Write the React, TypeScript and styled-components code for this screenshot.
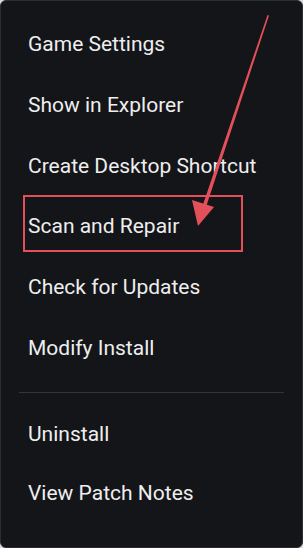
import React from 'react';
import styled, { createGlobalStyle } from 'styled-components';

const GlobalStyle = createGlobalStyle`
  html, body {
    margin: 0;
    padding: 0;
    background: #d9d9d9;
  }
`;

// the context menu panel, fills the whole window
const Menu = styled.div`
  position: relative;
  box-sizing: border-box;
  width: 303px;
  height: 548px;
  background: #141519;
  border: 1px solid #2c2d31;
  border-radius: 6px;
  padding-top: 13px;
  display: flex;
  flex-direction: column;
  font-family: Roboto, 'Noto Sans', sans-serif;
  overflow: hidden;
`;

const Group = styled.div<{ $row: number }>`
  display: grid;
  grid-auto-rows: ${p => p.$row}px;
`;

const Item = styled.div<{ $highlighted?: boolean }>`
  position: relative;
  display: flex;
  align-items: center;
  padding-left: 27px;
  color: #eeeeee;
  font-size: 21px;

  /* red annotation box drawn on top of the screenshot */
  &::after {
    content: '';
    display: ${p => (p.$highlighted ? 'block' : 'none')};
    position: absolute;
    left: 22px;
    top: -1px;
    width: 216px;
    height: 53px;
    border: 2px solid #e4505a;
  }
`;

const Divider = styled.hr`
  margin: 14px 18px 12px 18px;
  border: none;
  border-top: 1px solid #34353a;
`;

const Arrow = styled.svg`
  position: absolute;
  left: 0;
  top: 0;
  pointer-events: none;
`;

const topItems = [
  'Game Settings',
  'Show in Explorer',
  'Create Desktop Shortcut',
  'Scan and Repair',
  'Check for Updates',
  'Modify Install',
];

const bottomItems = ['Uninstall', 'View Patch Notes'];

const App: React.FC = () => {
  return (
    <>
      <GlobalStyle />
      <Menu>
        <Group $row={60.7}>
          {topItems.map(label => (
            <Item key={label} $highlighted={label === 'Scan and Repair'}>
              {label}
            </Item>
          ))}
        </Group>
        <Divider />
        <Group $row={58.7}>
          {bottomItems.map(label => (
            <Item key={label}>{label}</Item>
          ))}
        </Group>
        <Arrow width="303" height="548" viewBox="0 0 303 548">
          <polygon points="266.5,14 268,14.5 205,206 201.5,205" fill="#e4505a" />
          <polygon points="197,225 191,199 213,206" fill="#e4505a" />
        </Arrow>
      </Menu>
    </>
  );
};

export default App;
